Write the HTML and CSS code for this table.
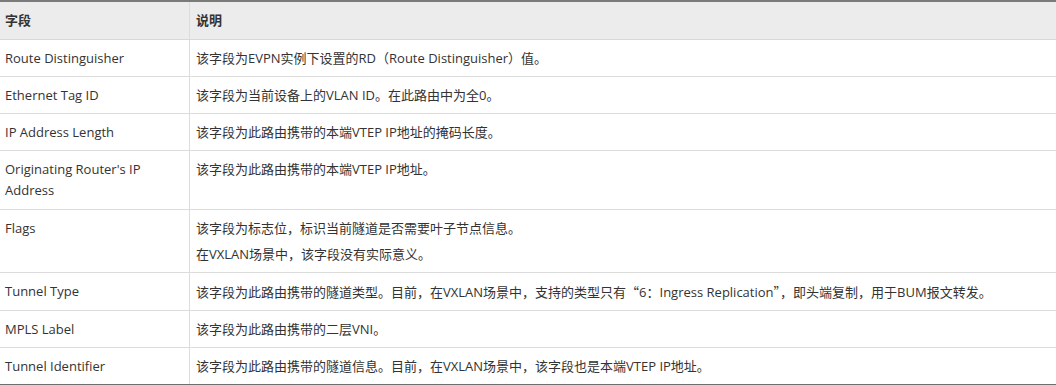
FILE: index.html
```html
<!DOCTYPE html>
<html lang="zh-CN">
<head>
<meta charset="utf-8">
<title>字段说明</title>
<link rel="stylesheet" href="styles.css">
</head>
<body>
<table class="fields">
  <thead>
    <tr><th class="col-name">字段</th><th class="col-desc">说明</th></tr>
  </thead>
  <tbody>
    <tr><td class="col-name">Route Distinguisher</td><td class="col-desc">该字段为EVPN实例下设置的RD（Route Distinguisher）值。</td></tr>
    <tr><td class="col-name">Ethernet Tag ID</td><td class="col-desc">该字段为当前设备上的VLAN ID。在此路由中为全0。</td></tr>
    <tr><td class="col-name">IP Address Length</td><td class="col-desc">该字段为此路由携带的本端VTEP IP地址的掩码长度。</td></tr>
    <tr class="row-tall"><td class="col-name">Originating Router's IP Address</td><td class="col-desc">该字段为此路由携带的本端VTEP IP地址。</td></tr>
    <tr><td class="col-name">Flags</td><td class="col-desc"><p class="para">该字段为标志位，标识当前隧道是否需要叶子节点信息。</p><p class="para para-next">在VXLAN场景中，该字段没有实际意义。</p></td></tr>
    <tr><td class="col-name">Tunnel Type</td><td class="col-desc">该字段为此路由携带的隧道类型。目前，在VXLAN场景中，支持的类型只有<span class="cjk">“</span>6：Ingress Replication<span class="cjk">”</span>，即头端复制，用于BUM报文转发。</td></tr>
    <tr><td class="col-name">MPLS Label</td><td class="col-desc">该字段为此路由携带的二层VNI。</td></tr>
    <tr><td class="col-name">Tunnel Identifier</td><td class="col-desc">该字段为此路由携带的隧道信息。目前，在VXLAN场景中，该字段也是本端VTEP IP地址。</td></tr>
  </tbody>
</table>
</body>
</html>
```
FILE: styles.css
```css
html, body {
  margin: 0;
  padding: 0;
  background: #ffffff;
}
body {
  font-family: "Open Sans", "Noto Sans CJK SC", sans-serif;
  font-size: 13px;
  color: #333333;
}
.fields {
  width: 1056px;
  border-collapse: collapse;
  border-top: 2px solid #7a7a7a;
  border-bottom: 2px solid #6f6f6f;
}
.fields th,
.fields td {
  text-align: left;
  vertical-align: top;
  line-height: 21px;
  padding: 8px 6px 7px 6px;
  border-bottom: 1px solid #dcdcdc;
}
.fields th {
  background: #ececec;
  font-weight: bold;
  padding-top: 8px;
  padding-bottom: 8px;
  border-bottom: 1px solid #d8d8d8;
}
.fields tr:last-child td {
  border-bottom: none;
}
.fields .row-tall td {
  padding-bottom: 8px;
}
.col-name {
  width: 178px;
  padding-left: 5px !important;
  border-right: 1px solid #dcdcdc;
}
.col-desc {
  white-space: nowrap;
}
.cjk {
  font-family: "Noto Sans CJK SC", sans-serif;
}
.para {
  margin: 0;
}
.para-next {
  margin-top: 5px;
}
```
